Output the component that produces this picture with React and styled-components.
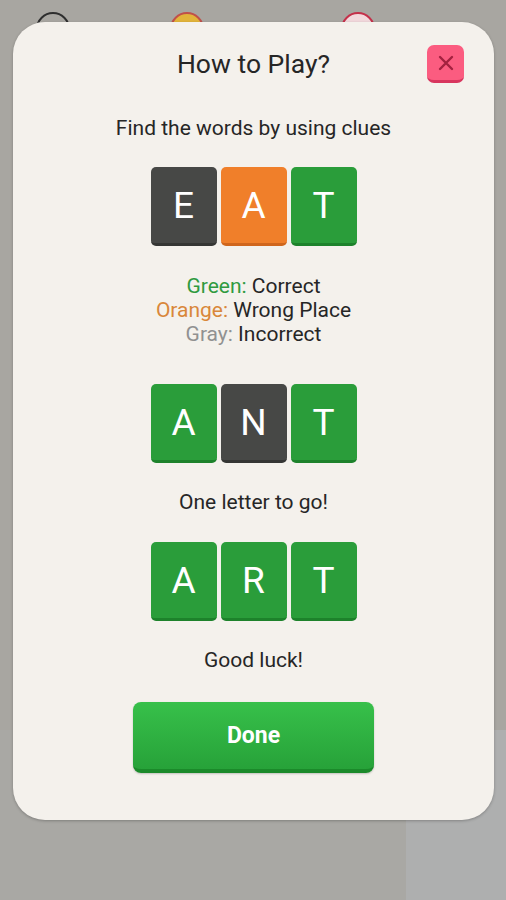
import styled, { createGlobalStyle } from 'styled-components';

const GlobalStyle = createGlobalStyle`
  html, body {
    margin: 0;
    padding: 0;
    background: #a8a6a1;
  }
  body {
    font-family: Roboto, 'Noto Sans', sans-serif;
  }
`;

const Screen = styled.div`
  position: relative;
  width: 506px;
  height: 900px;
  overflow: hidden;
  background: #a8a6a1;
`;

const BottomBand = styled.div`
  position: absolute;
  left: 0;
  right: 0;
  top: 730px;
  bottom: 0;
  display: flex;
`;

const BandPart = styled.div`
  width: ${(props) => props.width};
  flex: ${(props) => (props.width ? 'none' : 1)};
  background: ${(props) => props.color};
`;

const BgIcon = styled.div`
  position: absolute;
  top: 12px;
  left: ${(props) => props.left}px;
  width: 34px;
  height: 34px;
  border-radius: 50%;
  border: 2px solid ${(props) => props.stroke};
  background: ${(props) => props.fill};
  box-sizing: border-box;
`;

const Modal = styled.div`
  position: relative;
  margin: 22px 0 0 13px;
  width: 481px;
  height: 798px;
  background: #f4f1ec;
  border-radius: 32px;
  box-shadow: 0 1px 3px rgba(0, 0, 0, 0.25);
  display: flex;
  flex-direction: column;
  align-items: center;
  color: #2b2b2b;
`;

const Header = styled.div`
  align-self: stretch;
  display: grid;
  grid-template-columns: 1fr auto 1fr;
  align-items: center;
  padding: 23px 30px 0;
`;

const Title = styled.h1`
  grid-column: 2;
  margin: 0;
  font-size: 26.5px;
  font-weight: 400;
  line-height: 30px;
  color: #262626;
`;

const CloseButton = styled.button`
  grid-column: 3;
  justify-self: end;
  width: 37px;
  height: 38px;
  padding: 0;
  border: none;
  border-bottom: 3px solid #d8365e;
  border-radius: 7px;
  background: #fb5c80;
  display: flex;
  align-items: center;
  justify-content: center;
  cursor: pointer;
`;

const Text = styled.p`
  margin: ${(props) => props.mt}px 0 0;
  font-size: 21px;
  line-height: 24px;
  text-align: center;
  color: #262626;
`;

const TileRow = styled.div`
  display: flex;
  gap: 4px;
  margin-top: ${(props) => props.mt}px;
`;

const tileColors = {
  gray: ['#474846', '#353634'],
  orange: ['#f07f2a', '#d0661c'],
  green: ['#2a9d3a', '#1d822b'],
};

const Tile = styled.div`
  width: 66px;
  height: 76px;
  border-radius: 5px;
  background: ${(props) => tileColors[props.color][0]};
  border-bottom: 3px solid ${(props) => tileColors[props.color][1]};
  display: flex;
  align-items: center;
  justify-content: center;
  color: #fff;
  font-family: Roboto, 'Liberation Sans', sans-serif;
  font-size: 37px;
  font-weight: 400;
`;

const Legend = styled.div`
  margin-top: 28px;
  display: flex;
  flex-direction: column;
  align-items: center;
  font-size: 21px;
  line-height: 24px;
  color: #262626;
`;

const Label = styled.span`
  color: ${(props) => props.color};
`;

const DoneButton = styled.button`
  margin-top: 30px;
  width: 241px;
  height: 71px;
  border: none;
  border-bottom: 4px solid #1b8a2a;
  border-radius: 8px;
  background: linear-gradient(#37c04a, #27a239);
  color: #fff;
  font-family: Roboto, sans-serif;
  font-size: 23px;
  font-weight: 700;
  cursor: pointer;
  box-shadow: 0 1px 2px rgba(0, 0, 0, 0.2);
`;

const rows = [
  [
    ['E', 'gray'],
    ['A', 'orange'],
    ['T', 'green'],
  ],
  [
    ['A', 'green'],
    ['N', 'gray'],
    ['T', 'green'],
  ],
  [
    ['A', 'green'],
    ['R', 'green'],
    ['T', 'green'],
  ],
];

const Row = ({ tiles, mt }) => (
  <TileRow mt={mt}>
    {tiles.map(([letter, color], i) => (
      <Tile key={i} color={color}>
        {letter}
      </Tile>
    ))}
  </TileRow>
);

const App = () => {
  return (
    <Screen>
      <GlobalStyle />
      <BottomBand>
        <BandPart width='406px' color='#a9a8a4' />
        <BandPart color='#aeafaf' />
      </BottomBand>
      <BgIcon left={36} stroke='#2e2e2e' fill='transparent' />
      <BgIcon left={170} stroke='#c0504a' fill='#e2b43a' />
      <BgIcon left={341} stroke='#c4304a' fill='#f2d8dc' />
      <Modal>
        <Header>
          <Title>How to Play?</Title>
          <CloseButton>
            <svg width='16' height='16' viewBox='0 0 16 16'>
              <path
                d='M2 2 L14 14 M14 2 L2 14'
                stroke='#a3213f'
                strokeWidth='2.4'
                strokeLinecap='round'
              />
            </svg>
          </CloseButton>
        </Header>
        <Text mt={33}>Find the words by using clues</Text>
        <Row tiles={rows[0]} mt={27} />
        <Legend>
          <span>
            <Label color='#2f9a3f'>Green:</Label> Correct
          </span>
          <span>
            <Label color='#d9873a'>Orange:</Label> Wrong Place
          </span>
          <span>
            <Label color='#919191'>Gray:</Label> Incorrect
          </span>
        </Legend>
        <Row tiles={rows[1]} mt={38} />
        <Text mt={27}>One letter to go!</Text>
        <Row tiles={rows[2]} mt={28} />
        <Text mt={27}>Good luck!</Text>
        <DoneButton>Done</DoneButton>
      </Modal>
    </Screen>
  );
};

export default App;
